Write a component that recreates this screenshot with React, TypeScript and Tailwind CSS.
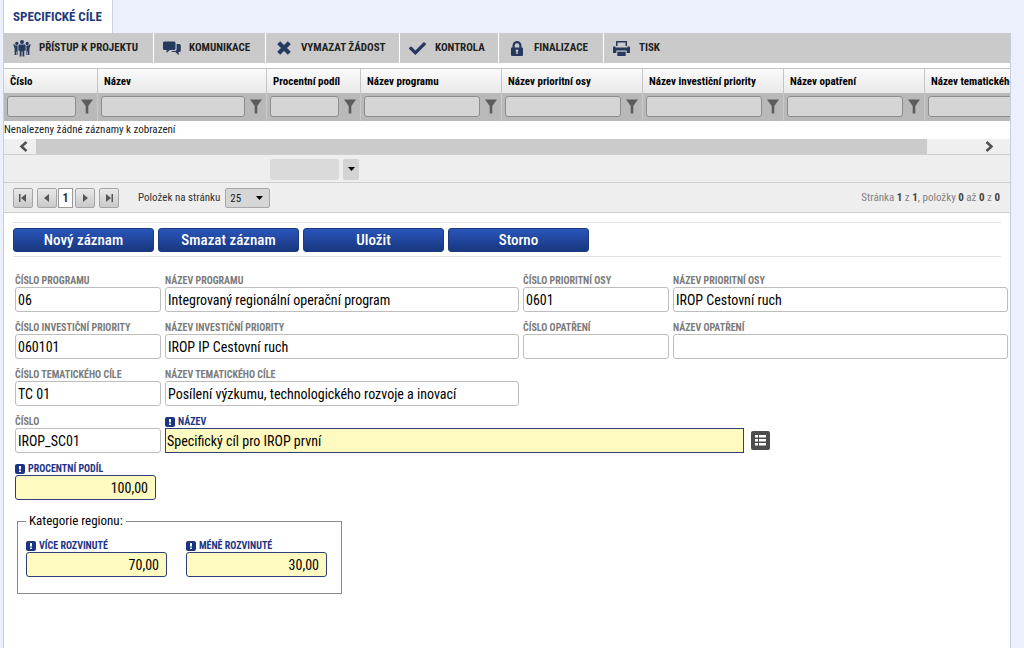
import { useState } from "react";
import type { ReactNode } from "react";
import { FaCheck } from "react-icons/fa";

type FieldProps = {
  id: string;
  label: string;
  value?: string;
  required?: boolean;
  numeric?: boolean;
  square?: boolean;
  className?: string;
};

const columns = [
  { title: "Číslo", width: "w-[94px]" },
  { title: "Název", width: "w-[169px]" },
  { title: "Procentní podíl", width: "w-[94px]" },
  { title: "Název programu", width: "w-[141px]" },
  { title: "Název prioritní osy", width: "w-[141px]" },
  { title: "Název investiční priority", width: "w-[141px]" },
  { title: "Název opatření", width: "w-[141px]" },
  { title: "Název tematického cíle", width: "w-[141px]" },
];

const actions = ["Nový záznam", "Smazat záznam", "Uložit", "Storno"];

function PeopleIcon() {
  return (
    <svg viewBox="0 0 18 17" className="h-[17px] w-[18px]" fill="currentColor">
      <circle cx="9" cy="2" r="2" />
      <circle cx="3.8" cy="3.4" r="1.6" />
      <circle cx="14.2" cy="3.4" r="1.6" />
      <path d="M6.600 4.600h4.800c.8 0 1.200.5 1.200 1.200v5h-1.300v5.700H9.500v-5h-1v5H6.700v-5.700H5.400v-5c0-.7.4-1.200 1.200-1.200z" />
      <path d="M.2 4.500l1.200-.3 1 1.400h2.200v9.400H3.800v-3.500h-.6V15H1.600V8.200z" />
      <path d="M17.800 4.500l-1.200-.3-1 1.400h-2.200V15h.8v-3.500h.6V15h1.600V8.200z" />
    </svg>
  );
}

function ChatIcon() {
  return (
    <svg viewBox="0 0 18 15" className="h-[15px] w-[18px]" fill="currentColor">
      <path d="M1.500.5h9.500c.8 0 1.500.7 1.500 1.500v5.500c0 .8-.7 1.500-1.500 1.500H6.800L3.600 12V9H1.500C.7 9 0 8.300 0 7.500V2C0 1.200.7.5 1.500.5z" />
      <path d="M13.600 3h2.600c.9 0 1.600.7 1.600 1.500v5c0 .9-.7 1.500-1.600 1.500h-.6v3.200L12.400 11H8.200l1.300-1h2.300c1 0 1.800-.8 1.800-1.800z" />
    </svg>
  );
}

function CrossIcon() {
  return (
    <svg viewBox="0 0 14 14" className="h-[14px] w-[14px]" fill="none" stroke="currentColor" strokeWidth="4.200">
      <path d="M1.700 1.700l10.600 10.600M12.300 1.700L1.700 12.300" />
    </svg>
  );
}

function LockIcon() {
  return (
    <svg viewBox="0 0 12 15" className="h-[15px] w-[12px]" fill="currentColor">
      <path
        fillRule="evenodd"
        d="M1.500 6.500V4.500a4.500 4.500 0 0 1 9 0v2h.5a1 1 0 0 1 1 1V14a1 1 0 0 1-1 1H1a1 1 0 0 1-1-1V7.500a1 1 0 0 1 1-1zM3.700 6.500h4.600v-2a2.300 2.300 0 0 0-4.600 0zM6 8.500a1.300 1.300 0 0 0-.7 2.400V13h1.400v-2.100A1.300 1.300 0 0 0 6 8.500z"
      />
    </svg>
  );
}

function PrintIcon() {
  return (
    <svg viewBox="0 0 17 15" className="h-[15px] w-[17px]" fill="currentColor">
      <path fillRule="evenodd" d="M3 0h11v5h-1.500V1.500h-8V5H3z" />
      <path d="M1 5.500h1.500v1h12v-1H16a1 1 0 0 1 1 1V12h-3.300V9.500H3.300V12H0V6.500a1 1 0 0 1 1-1z" />
      <path d="M4.300 10.700h8.400V15H4.300z" />
    </svg>
  );
}

const toolbar: { label: string; icon: ReactNode; width: string }[] = [
  { label: "PŘÍSTUP K PROJEKTU", icon: <PeopleIcon />, width: "w-[150px]" },
  { label: "KOMUNIKACE", icon: <ChatIcon />, width: "w-[112px]" },
  { label: "VYMAZAT ŽÁDOST", icon: <CrossIcon />, width: "w-[134px]" },
  { label: "KONTROLA", icon: <FaCheck size={17} />, width: "w-[99px]" },
  { label: "FINALIZACE", icon: <LockIcon />, width: "w-[105px]" },
  { label: "TISK", icon: <PrintIcon />, width: "w-[70px]" },
];

function RequiredMark() {
  return (
    <svg viewBox="0 0 10 10" className="mb-px h-[10px] w-[10px] shrink-0">
      <rect width="10" height="10" rx="2" fill="#1b3484" />
      <path d="M4 2h2v3.500H4zM4 6.500h2v1.500H4z" fill="#fff" />
    </svg>
  );
}

function Field({ id, label, value = "", required, numeric, square, className = "" }: FieldProps) {
  return (
    <div className={className}>
      <label
        htmlFor={id}
        className={`flex h-[14px] items-end gap-[3px] text-[10px] leading-[12px] font-bold ${required ? "text-[#1b3484]" : "text-[#7b7b7b]"}`}
      >
        {required && <RequiredMark />}
        {label}
      </label>
      <input
        id={id}
        defaultValue={value}
        className={`block h-[25px] w-full border pt-px text-[14px] text-black outline-none ${
          required ? "border-[#2b3f78] bg-[#fffac0]" : "border-[#bdbdbd] bg-white"
        } ${square ? "px-px" : "rounded-[3px] px-[2px]"} ${numeric ? "pr-[7px] text-right" : ""}`}
      />
    </div>
  );
}

function Funnel() {
  return (
    <svg viewBox="0 0 12 15" className="h-[15px] w-[12px] shrink-0" fill="#5c5c5c">
      <path d="M0 .5h12L7.300 7v7.500H4.700V7z" />
    </svg>
  );
}

function PagerButton({ label, d }: { label: string; d: string }) {
  return (
    <button
      aria-label={label}
      className="flex h-5 w-5 items-center justify-center rounded-[2px] border border-[#a6a6a6] bg-linear-to-b from-[#e9e9e9] to-[#c9c9c9]"
    >
      <svg viewBox="0 0 10 10" className="h-[10px] w-[10px]" fill="#555">
        <path d={d} />
      </svg>
    </button>
  );
}

export default function App() {
  const [pageSize, setPageSize] = useState("25");

  return (
    <main className="min-h-screen bg-[#ecf0fc] pr-[13px] pl-[3px] font-['Roboto_Condensed','Liberation_Sans_Narrow',Roboto,sans-serif] text-black">
      <div className="flex min-h-screen flex-col border-l border-[#c9cde0]">
        <div className="flex h-[33px]">
          <a href="#cile" className="flex items-center border-r border-[#d0d0d8] bg-white pr-[10px] pl-[9px] text-[13px] font-bold text-[#223a7c]">
            SPECIFICKÉ CÍLE
          </a>
        </div>

        <div className="flex-1 border-r border-[#c9cde0] bg-white">
          <nav className="flex h-[30px] bg-[#cacaca]">
            {toolbar.map((item, i) => (
              <button
                key={item.label}
                className={`flex items-center gap-[8px] pl-[8px] text-[11px] font-bold text-[#222] ${item.width} ${i < toolbar.length - 1 ? "border-r border-white" : ""}`}
              >
                <span className="flex w-[19px] justify-center text-[#253a5e]">{item.icon}</span>
                <span className="pt-px">{item.label}</span>
              </button>
            ))}
          </nav>

          {/* Records grid */}
          <div className="mt-[5px] overflow-hidden">
            <table className="w-[1062px] table-fixed border-separate border-spacing-0">
              <thead>
                <tr className="h-[25px] bg-linear-to-b from-[#fbfbfb] to-[#e9e9e9]">
                  {columns.map((col) => (
                    <th key={col.title} className={`border-t border-r border-[#c4c4c4] p-0 pt-[2px] pl-[6px] text-left text-[11px] font-bold whitespace-nowrap ${col.width}`}>
                      {col.title}
                    </th>
                  ))}
                </tr>
                <tr className="h-[28px] bg-[#b9b9b9]">
                  {columns.map((col) => (
                    <td key={col.title} className="border-r border-[#cacaca] p-0 pb-px">
                      <div className="flex items-center gap-[5px] pr-[4px] pl-[3px]">
                        <input aria-label={col.title} className="h-[21px] min-w-0 flex-1 rounded-[3px] border border-[#8c8c8c] bg-[#d5d5d5] px-1 text-[11px]" />
                        <Funnel />
                      </div>
                    </td>
                  ))}
                </tr>
              </thead>
              <tbody>
                <tr className="h-[18px]">
                  <td colSpan={8} className="p-0 text-[11px] leading-[18px] text-[#222]">Nenalezeny žádné záznamy k zobrazení</td>
                </tr>
              </tbody>
            </table>
          </div>

          <div className="flex h-[15px] bg-[#efefef]">
            <button aria-label="Posunout vlevo" className="flex w-8 items-center justify-center pl-[7px]">
              <svg viewBox="0 0 9 11" className="h-[11px] w-[9px]" fill="none" stroke="#505050" strokeWidth="2.500">
                <path d="M7.500 1L2.500 5.500l5 4.500" />
              </svg>
            </button>
            <div className="flex-1">
              <div className="h-full w-[95%] bg-[#cbcbcb]" />
            </div>
            <button aria-label="Posunout vpravo" className="flex w-9 items-center pl-[11px]">
              <svg viewBox="0 0 9 11" className="h-[11px] w-[9px]" fill="none" stroke="#505050" strokeWidth="2.500">
                <path d="M1.500 1l5 4.500-5 4.500" />
              </svg>
            </button>
          </div>

          <div className="flex h-[28px] items-center gap-1 border-t border-[#cfcfcf] bg-[#eee] pt-px pl-[266px]">
            <input aria-label="Souhrn" className="h-[21px] w-[69px] rounded-[3px] bg-[#dadada]" />
            <button aria-label="Vybrat souhrn" className="flex h-[21px] w-4 items-center justify-center rounded-[2px] bg-[#d3d3d3]">
              <svg viewBox="0 0 7 4" className="h-1 w-[7px]"><path d="M0 0h7L3.500 4z" /></svg>
            </button>
          </div>

          {/* Pager */}
          <div className="flex h-[31px] items-center border-y border-[#cfcfcf] bg-[#eee] pr-[10px] pl-[9px] text-[11px] text-[#333]">
            <div className="flex items-center">
              <PagerButton label="První stránka" d="M1 1h1.500v8H1zM8 1v8L3 5z" />
              <span className="w-1" />
              <PagerButton label="Předchozí stránka" d="M7 1v8L2 5z" />
              <span className="w-px" />
              <button className="h-5 w-[15px] border border-[#999] bg-white text-[12px] leading-none font-bold">1</button>
              <span className="w-[2px]" />
              <PagerButton label="Další stránka" d="M3 1v8l5-4z" />
              <span className="w-1" />
              <PagerButton label="Poslední stránka" d="M2 1v8l5-4zM7.500 1H9v8H7.500z" />
            </div>
            <label htmlFor="pageSize" className="ml-[19px] pt-[2px]">Položek na stránku</label>
            <div className="relative ml-[5px]">
              <select
                id="pageSize"
                value={pageSize}
                onChange={(e) => setPageSize(e.target.value)}
                className="block h-5 w-[45px] appearance-none rounded-[2px] border border-[#a8a8a8] bg-[#d6d6d6] pt-[2px] pl-1 text-[11px] text-[#222]"
              >
                <option>10</option>
                <option>25</option>
                <option>50</option>
              </select>
              <svg viewBox="0 0 7 4" className="pointer-events-none absolute top-2 right-[7px] h-1 w-[7px]"><path d="M0 0h7L3.500 4z" /></svg>
            </div>
            <p className="ml-auto pt-[2px] text-[#828282]">
              Stránka <b className="text-[#444]">1</b> z <b className="text-[#444]">1</b>, položky <b className="text-[#444]">0</b> až <b className="text-[#444]">0</b> z <b className="text-[#444]">0</b>
            </p>
          </div>

          <div className="mx-[9px] mt-[9px] flex h-[35px] items-center gap-1 border-y border-[#e2e2e2]">
            {actions.map((action) => (
              <button
                key={action}
                className="h-6 w-[141px] rounded-[3px] border border-[#1d3a80] bg-linear-to-b from-[#2a55bb] to-[#17377f] pt-px text-[15px] leading-none font-medium text-white"
              >
                {action}
              </button>
            ))}
          </div>

          <form className="pt-[16px] pr-[2px] pl-[11px]">
            <div className="grid grid-cols-[146px_354fr_146px_335fr] gap-x-1 gap-y-2">
              <Field id="cisloProgramu" label="ČÍSLO PROGRAMU" value="06" />
              <Field id="nazevProgramu" label="NÁZEV PROGRAMU" value="Integrovaný regionální operační program" />
              <Field id="cisloOsy" label="ČÍSLO PRIORITNÍ OSY" value="0601" />
              <Field id="nazevOsy" label="NÁZEV PRIORITNÍ OSY" value="IROP Cestovní ruch" />
              <Field id="cisloPriority" label="ČÍSLO INVESTIČNÍ PRIORITY" value="060101" />
              <Field id="nazevPriority" label="NÁZEV INVESTIČNÍ PRIORITY" value="IROP IP Cestovní ruch" />
              <Field id="cisloOpatreni" label="ČÍSLO OPATŘENÍ" />
              <Field id="nazevOpatreni" label="NÁZEV OPATŘENÍ" />
              <Field id="cisloCile" label="ČÍSLO TEMATICKÉHO CÍLE" value="TC 01" />
              <Field id="nazevCile" label="NÁZEV TEMATICKÉHO CÍLE" value="Posílení výzkumu, technologického rozvoje a inovací" />
              <Field id="cislo" label="ČÍSLO" value="IROP_SC01" className="col-start-1" />
              <div className="col-span-3 flex items-end gap-[7px]">
                <Field id="nazev" label="NÁZEV" value="Specifický cíl pro IROP první" required square className="w-[579px]" />
                <button type="button" aria-label="Vybrat ze seznamu" className="mb-[3px] flex h-[19px] w-[19px] items-center justify-center rounded-[2px] bg-[#4d4d4d]">
                  <svg viewBox="0 0 11 11" className="h-[11px] w-[11px]" fill="#fff">
                    <path d="M0 0h3v2.500H0zM4 0h7v2.500H4zM0 4h3v2.500H0zM4 4h7v2.500H4zM0 8h3v2.500H0zM4 8h7v2.500H4z" />
                  </svg>
                </button>
              </div>
            </div>

            <Field id="procentniPodil" label="PROCENTNÍ PODÍL" value="100,00" required numeric className="mt-2 w-[141px]" />

            <fieldset className="mt-[12px] ml-[2px] flex w-[325px] gap-[19px] border border-[#8a8a8a] px-2 pt-2 pb-[16px]">
              <legend className="px-[3px] text-[13px] leading-[18px]">Kategorie regionu:</legend>
              <Field id="viceRozvinute" label="VÍCE ROZVINUTÉ" value="70,00" required numeric className="w-[141px]" />
              <Field id="meneRozvinute" label="MÉNĚ ROZVINUTÉ" value="30,00" required numeric className="w-[141px]" />
            </fieldset>
          </form>
        </div>
      </div>
    </main>
  );
}
